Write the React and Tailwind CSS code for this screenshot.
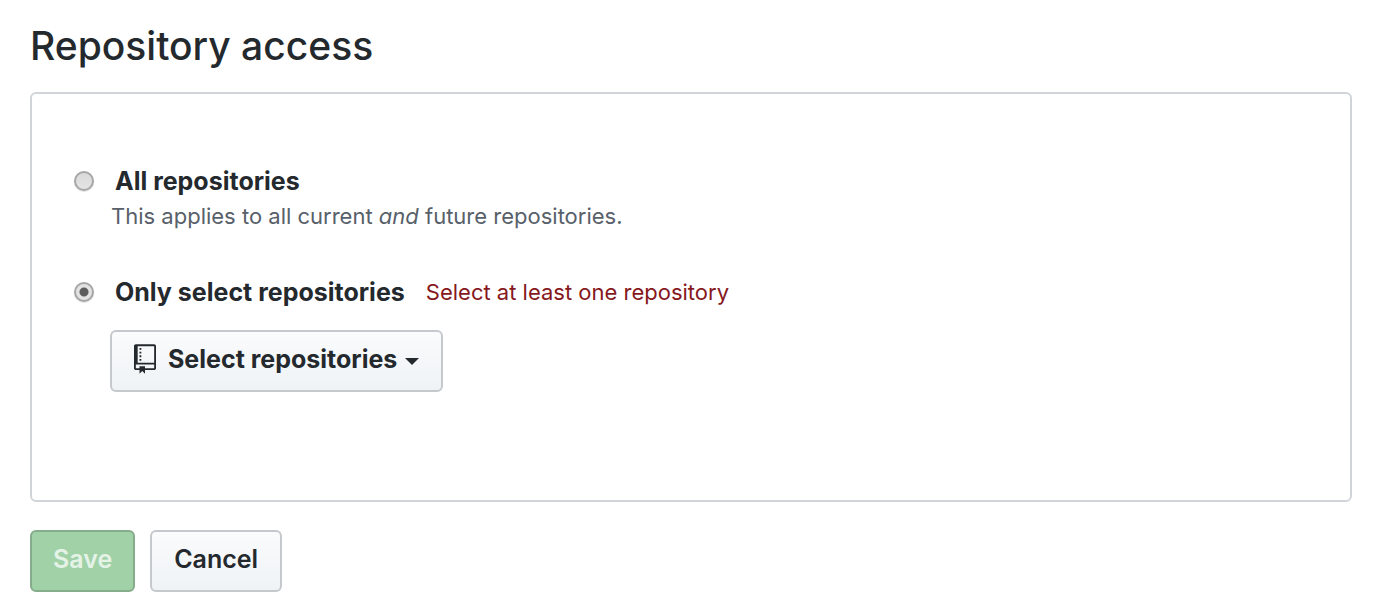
function RepoIcon() {
  return (
    <svg viewBox="0 0 12 16" className="h-[30px] w-[22px]" fill="currentColor" aria-hidden="true">
      <path
        fillRule="evenodd"
        d="M4 9H3V8h1v1zm0-3H3v1h1V6zm0-2H3v1h1V4zm0-2H3v1h1V2zm8-1v12c0 .55-.45 1-1 1H6v2l-1.5-1.5L3 16v-2H1c-.55 0-1-.45-1-1V1c0-.55.45-1 1-1h10c.55 0 1 .45 1 1zm-1 10H1v2h2v-1h3v1h5v-2zm0-10H2v9h9V1z"
      />
    </svg>
  );
}

const radio =
  "h-5 w-5 shrink-0 appearance-none rounded-full border-2 border-[#a6a6a6] bg-linear-to-b from-[#dadada] to-[#e4e4e4] shadow-[0_1px_1px_rgba(0,0,0,0.12)] checked:bg-[radial-gradient(circle,#5c5c5c_4px,#e2e2e2_5px)]";

const button =
  "flex items-center rounded-md border-2 border-[#c5c9cd] bg-linear-to-b from-[#fafbfc] to-[#eff3f6] pt-[9px] pb-[13px] text-[25px] leading-9 text-[#24292e]";

const label = "pt-px text-[25px] leading-9 font-bold";

export default function App() {
  return (
    <main className="px-[30px] pt-5 pr-[26px] pb-5 font-['Inter',sans-serif] text-[#24292e]">
      <h1 className="text-[39px] leading-[52px] font-medium">Repository access</h1>
      <form>
        <fieldset className="mt-5 rounded-md border-2 border-[#d1d5da] px-[42px] pt-[68px] pb-[108px]">
          <div className="flex items-center gap-[21px]">
            <input id="all" type="radio" name="access" className={radio} />
            <label htmlFor="all" className={label}>
              All repositories
            </label>
          </div>
          <p className="pl-[37px] text-[22px] leading-[34px] text-[#586069]">
            This applies to all current <em>and</em> future repositories.
          </p>
          <div className="mt-10 flex items-center gap-[21px]">
            <input id="select" type="radio" name="access" defaultChecked className={radio} />
            <label htmlFor="select" className={label}>
              Only select repositories
            </label>
            <span className="pt-px text-[22px] leading-9 text-[#86181d]">Select at least one repository</span>
          </div>
          <div className="mt-5 flex pl-9">
            <button type="button" className={`${button} px-[22px] font-bold`}>
              <RepoIcon />
              <span className="ml-3">Select repositories</span>
              <span className="mt-1 ml-2 border-x-[7px] border-t-[7px] border-x-transparent border-t-[#24292e]" />
            </button>
          </div>
        </fieldset>
        <div className="mt-7 flex gap-[15px]">
          <button
            type="submit"
            disabled
            className="rounded-md border-2 border-[#86ad8b] bg-[#a0d1a7] px-[21px] pt-[9px] pb-[13px] text-[25px] leading-9 font-semibold text-[#e5f3e7]"
          >
            Save
          </button>
          <button type="button" className={`${button} px-[22px] font-semibold`}>
            Cancel
          </button>
        </div>
      </form>
    </main>
  );
}
